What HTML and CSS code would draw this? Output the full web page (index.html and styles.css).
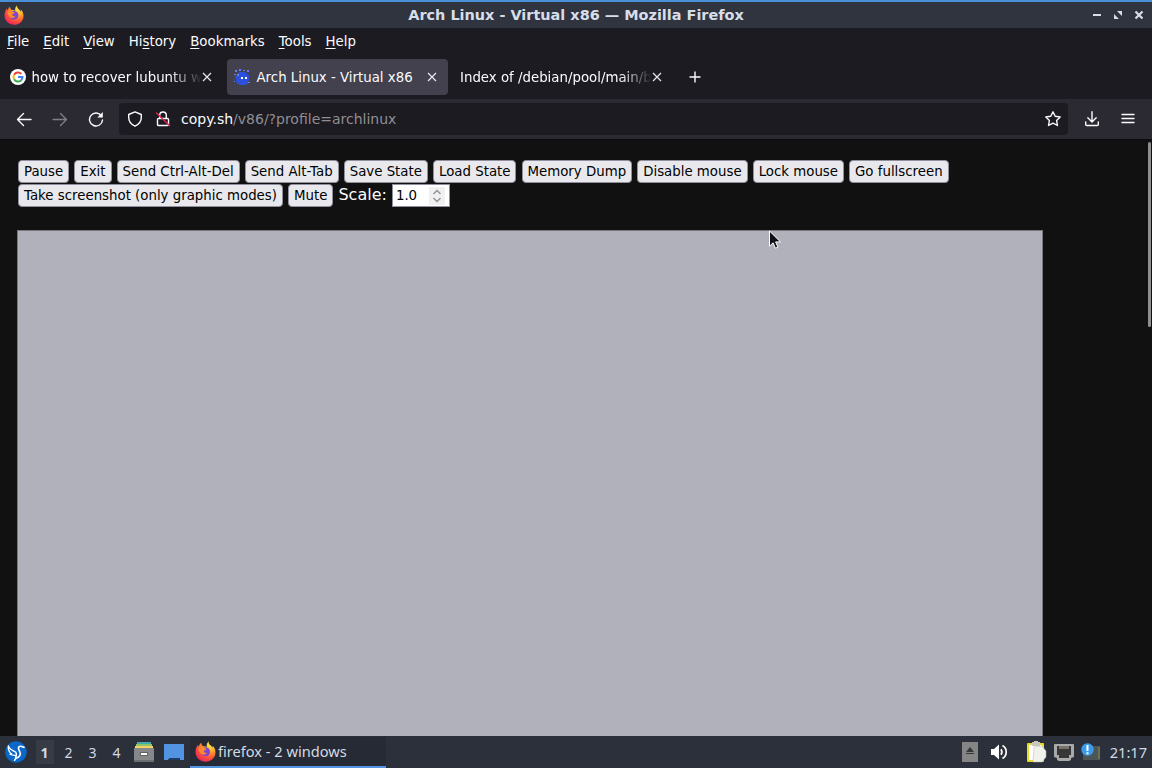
FILE: index.html
```
<!DOCTYPE html>
<html lang="en">
<head>
    <meta charset="UTF-8">
    <meta name="viewport" content="width=device-width, initial-scale=1.0">
    <title>Arch Linux - Virtual x86</title>
    <link rel="stylesheet" href="styles.css">
</head>
<body>

    <!-- Shared icons -->
    <svg class="defs" width="0" height="0">
        <defs>
            <radialGradient id="flame" cx="0.75" cy="0.15" r="0.95">
                <stop offset="0" stop-color="#fff04a"/>
                <stop offset="0.35" stop-color="#ffad2c"/>
                <stop offset="0.65" stop-color="#ff5a36"/>
                <stop offset="1" stop-color="#e8205f"/>
            </radialGradient>
            <symbol id="firefox" viewBox="0 0 20 20">
                <path fill="url(#flame)" d="M13.2 0.2c-.5 2 .3 2.900 1.800 4.200 1 .8 1.500 1.500 1.700 2.300.3-.6.200-1.600.1-2.200 2 1.900 2.900 4.500 2.700 7.200-.4 4.700-4.400 8.100-9.400 8.100C4.700 19.800.5 15.700.5 10.500c0-2.800 1-5.200 2.400-6.900 0 .8.200 1.400.5 1.900C4 3.700 5 2.300 6 1.700c0 1.500.8 2.700 1.900 3.300 1.300-.2 2.500.1 3.300.7-.4-2 .2-4.200 2-5.500z"/>
                <circle cx="10" cy="10.300" r="4.300" fill="#7a45d8"/>
                <path fill="#ff8a2a" d="M3.500 6.500c1.800-1 3.600-.7 4.600.2 1.200-.1 2.200.2 2.600.8-.3 1-1.500 1.300-2.500 1.800.3 1.800 1.700 2.300 3.400 1.900-1.200 1.900-4 2.400-5.800.9C4.300 11 3.400 8.800 3.500 6.500z"/>
            </symbol>
            <symbol id="close" viewBox="0 0 10 10">
                <path d="M1 1l8 8M9 1l-8 8" fill="none" stroke="#e8e8ee" stroke-width="1.200"/>
            </symbol>
        </defs>
    </svg>

    <!-- Window title -->
    <div class="titlebar">
        <svg class="app-icon" width="20" height="20"><use href="#firefox"/></svg>
        <span class="title">Arch Linux - Virtual x86 — Mozilla Firefox</span>
        <div class="window-buttons">
            <svg width="10" height="10" viewBox="0 0 10 10"><path d="M1 5h8" stroke="#d8dee9" stroke-width="2"/></svg>
            <svg width="10" height="10" viewBox="0 0 10 10" fill="#d8dee9"><path d="M4 1h5v5zM1 4v5h5z"/></svg>
            <svg width="10" height="10" viewBox="0 0 10 10"><path d="M1.500 1.500l7 7M8.500 1.500l-7 7" stroke="#d8dee9" stroke-width="2.200"/></svg>
        </div>
    </div>

    <div class="menubar">
        <span><u>F</u>ile</span>
        <span><u>E</u>dit</span>
        <span><u>V</u>iew</span>
        <span>Hi<u>s</u>tory</span>
        <span><u>B</u>ookmarks</span>
        <span><u>T</u>ools</span>
        <span><u>H</u>elp</span>
    </div>

    <!-- Tabs -->
    <div class="tabs">
        <div class="tab">
            <svg class="favicon" width="16" height="16" viewBox="0 0 16 16">
                <circle cx="8" cy="8" r="8" fill="#fff"/>
                <g fill="none" stroke-width="2">
                    <path d="M4.100 5.700A4.500 4.500 0 0 1 11.300 4.900" stroke="#ea4335"/>
                    <path d="M4.100 10.200A4.500 4.500 0 0 1 4.100 5.700" stroke="#fbbc05"/>
                    <path d="M11 11.400A4.500 4.500 0 0 1 4.100 10.200" stroke="#34a853"/>
                    <path d="M8 8h4.500A4.500 4.500 0 0 1 11 11.400" stroke="#4285f4"/>
                </g>
            </svg>
            <span class="label fade">how to recover lubuntu w</span>
            <svg class="close" width="10" height="10"><use href="#close"/></svg>
        </div>
        <div class="tab active">
            <svg class="favicon" width="16" height="16" viewBox="0 0 16 16">
                <path fill="#2d50dc" d="M3 4h2V3h6v1h2v2h2v6h-1v3h-2v1H5v-1H3v-2H2V9H1V7h2z"/>
                <path fill="#5d82ff" d="M1 1h2v2H1zM5 0h2v2H5zM9 1h2v1H9zM13 1h2v2h-2zM0 5h2v1H0zM3 5h2v2H3zM0 12h1v1H0zM14 13h2v1h-2z"/>
                <path fill="#fff" d="M7 8h2v2H7zM11 8h2v2h-2z"/>
            </svg>
            <span class="label">Arch Linux - Virtual x86</span>
            <svg class="close" width="10" height="10"><use href="#close"/></svg>
        </div>
        <div class="tab">
            <span class="label fade">Index of /debian/pool/main/b</span>
            <svg class="close" width="10" height="10"><use href="#close"/></svg>
        </div>
        <svg class="new-tab" width="12" height="12" viewBox="0 0 12 12"><path d="M6 .5v11M.5 6h11" stroke="#fbfbfe" stroke-width="1.400"/></svg>
    </div>

    <!-- Navigation -->
    <div class="toolbar">
        <div class="nav">
            <svg width="16" height="16" viewBox="0 0 16 16"><path d="M15 8.500H1.500M7.500 2.500l-6 6 6 6"/></svg>
            <svg class="disabled" width="16" height="16" viewBox="0 0 16 16"><path d="M1 8.500h13.500M8.500 2.500l6 6-6 6"/></svg>
            <svg width="16" height="16" viewBox="0 0 16 16"><path d="M13.500 5A6.500 6.500 0 1 0 14.500 9"/><path d="M14.800 1v5.500H9.300z" fill="#fbfbfe" stroke="none"/></svg>
        </div>
        <div class="urlbar">
            <svg width="16" height="16" viewBox="0 0 16 16"><path d="M8 .9l6.300 2.600v3c0 3.800-2.400 6.900-6.300 8.700C4.100 13.400 1.700 10.300 1.700 6.500v-3z"/></svg>
            <svg width="16" height="16" viewBox="0 0 16 16"><path d="M4.700 7V4.300a3.300 3.300 0 0 1 6.600 0V7M3.500 7.500h9q1 0 1 1v5q0 1-1 1h-9q-1 0-1-1v-5q0-1 1-1z"/><path class="slash" d="M1.500 2l13 12.500"/></svg>
            <span class="url">copy.sh<span class="path">/v86/?profile=archlinux</span></span>
            <svg class="star" width="18" height="18" viewBox="0 0 18 18"><path d="M9 1.800l2.200 4.500 5 .7-3.600 3.500.9 5L9 13.100l-4.500 2.400.9-5L1.800 7l5-.7z"/></svg>
        </div>
        <svg width="16" height="16" viewBox="0 0 16 16"><path d="M8 .8v10M3.800 6.700L8 10.900l4.200-4.200M1.700 11v2.500q0 1 1 1h10.600q1 0 1-1V11"/></svg>
        <svg width="16" height="16" viewBox="0 0 16 16"><path d="M2 3.500h12M2 7.500h12M2 11.500h12"/></svg>
    </div>

    <!-- Emulator page -->
    <div class="page">
        <div class="options">
            <button>Pause</button>
            <button>Exit</button>
            <button>Send Ctrl-Alt-Del</button>
            <button>Send Alt-Tab</button>
            <button>Save State</button>
            <button>Load State</button>
            <button>Memory Dump</button>
            <button>Disable mouse</button>
            <button>Lock mouse</button>
            <button>Go fullscreen</button>
        </div>
        <div class="options">
            <button>Take screenshot (only graphic modes)</button>
            <button>Mute</button>
            <span class="scale-label">Scale:</span>
            <div class="scale">
                <span>1.0</span>
                <svg width="16" height="18" viewBox="0 0 16 18"><path d="M4.500 7L8 3.500 11.500 7M4.500 11L8 14.500 11.500 11" fill="none" stroke="#8f8f94" stroke-width="1.300"/></svg>
            </div>
        </div>
        <div class="screen"></div>
        <div class="scrollbar"></div>
        <svg class="cursor" width="14" height="20" viewBox="0 0 14 20"><path d="M1.500 1v15.200l3.600-3.400 2.300 5.400 2.500-1.100-2.300-5.200h4.900z" fill="#101018" stroke="#fff" stroke-width="1"/></svg>
    </div>

    <!-- Panel -->
    <div class="taskbar">
        <svg class="start" width="22" height="22" viewBox="0 0 22 22">
            <circle cx="11" cy="11" r="10.700" fill="#0b68c8"/>
            <g fill="none" stroke="#fff" stroke-linecap="round" stroke-linejoin="round">
                <path stroke-width="1.600" d="M19 6.300c-1.500-.3-2.300-1.300-3.900-1-2.700.6-1.500 3.500-.3 5.400 1.500 2.800-.5 5.500-3.300 6.300-.9.500-1.500 1.200-1.900 2.300"/>
                <path stroke-width="1.300" d="M3.300 5c1 2.700 3.400 4.200 7.400 6.200M3.300 5c-.3 4 1 6.500 3.500 8M5 13.300c1.800 1 3.700 1.200 5.700 1M10.700 11.200c1.200 1.900.9 3.800-.2 5.300"/>
            </g>
        </svg>
        <div class="desktops">
            <span class="current">1</span>
            <span>2</span>
            <span>3</span>
            <span>4</span>
        </div>
        <svg class="files" width="22" height="22" viewBox="0 0 22 22">
            <path fill="#44a9ad" d="M4 1h14v4H4z"/>
            <path fill="#8fc36b" d="M3 3h16v3H3z"/>
            <path fill="#f2d263" d="M2 5h18v4H2z"/>
            <rect x="1" y="7" width="20" height="14" rx="1" fill="#85878a"/>
            <path fill="#6b6d70" d="M1 19h20v2H1z"/>
            <rect x="7" y="11" width="8" height="4" rx="1" fill="#606266"/>
            <rect x="8" y="12" width="6" height="2" fill="#fff"/>
        </svg>
        <svg class="desktop" width="20" height="18" viewBox="0 0 20 18">
            <path fill="#5294e2" d="M0 1h20v16h-4v-2H6v2H0z"/>
            <path fill="#1f3d66" d="M5 15h10v1h1v1H4v-1h1z"/>
        </svg>
        <div class="task">
            <svg width="21" height="21"><use href="#firefox"/></svg>
            <span>firefox - 2 windows</span>
        </div>
        <div class="tray">
            <svg width="16" height="20" viewBox="0 0 16 20"><rect width="16" height="20" fill="#858585"/><path d="M8 5l4 5H4zM4 11h8v1H4z" fill="#34363b"/></svg>
            <svg class="volume" width="18" height="16" viewBox="0 0 18 16"><path fill="#fff" d="M1 5h3l5-4.500v15L4 11H1z"/><path d="M11 5.200q1.800 2.800 0 5.600M12.500 1.500c5 3 5 10 0 13" fill="none" stroke="#fff" stroke-width="1.700"/></svg>
            <svg class="clipboard" width="20" height="22" viewBox="0 0 20 22"><rect y="2" width="17" height="19" rx="1" fill="#e6dc2c"/><path fill="#fff" d="M2 4h13v15H2z"/><path fill="#c8c8bd" d="M5 1h2V0h4v1h2v4H5z"/><path fill="#f2f2ec" stroke="#bbb9aa" stroke-width=".5" d="M7 6l8-1 4 5v6l-4 5H6z"/></svg>
            <svg class="network" width="20" height="19" viewBox="0 0 20 19"><path fill="#aaa9aa" d="M1 1h18q1 0 1 1v12l-3 1v2l-2 1H5l-2-1v-2l-3-1V2q0-1 1-1z"/><path fill="#393638" d="M3 3h14v9h-2v3H5v-3H3z"/><path d="M6 3v3M8 3v3M10 3v3M12 3v3M14 3v3" stroke="#c6bda7" stroke-width=".9"/></svg>
            <svg class="notifier" width="20" height="18" viewBox="0 0 20 18"><path fill="#4c5657" d="M2 3h17v14H2z"/><path fill="#687158" d="M17 4h2v12h-2z"/><circle cx="6.500" cy="6.500" r="6.200" fill="#3b9aea"/><path d="M6.500 2v6M6.500 9.200v2" stroke="#fff" stroke-width="2"/></svg>
            <span class="clock">21:17</span>
        </div>
    </div>

</body>
</html>
```

FILE: styles.css
```
* {
    box-sizing: border-box;
}
body {
    margin: 0;
    width: 1152px;
    height: 768px;
    overflow: hidden;
    display: flex;
    flex-direction: column;
    background: #111;
    color: #fbfbfe;
    font-family: 'DejaVu Sans', sans-serif;
    font-size: 13.33px;
}
svg {
    display: block;
    flex-shrink: 0;
}
.defs {
    height: 0;
}

/* title bar */
.titlebar {
    height: 28px;
    border-top: 2px solid #4a90d9;
    background: #2f343f;
    color: #d8dee9;
    display: grid;
    grid-template-columns: 1fr auto 1fr;
    align-items: center;
    padding: 0 8px 0 4px;
}
.title {
    font-weight: bold;
    font-size: 14.45px;
    margin-left: 4px;
}
.window-buttons {
    display: flex;
    justify-content: flex-end;
    gap: 11px;
}

.menubar {
    height: 26px;
    background: #1c1b22;
    display: flex;
    align-items: center;
    gap: 14px;
    padding-left: 7px;
}
.menubar u {
    text-underline-offset: 2px;
}

/* tabs */
.tabs {
    height: 45px;
    background: #1c1b22;
    display: flex;
    align-items: center;
    padding: 1px 0 0 2px;
    gap: 4px;
}
.tab {
    width: 221px;
    height: 36px;
    display: flex;
    align-items: center;
    padding: 0 11px 0 8px;
    border-radius: 4px;
    white-space: nowrap;
}
.tab.active {
    background: #42414d;
}
.tab.active .favicon {
    margin: 0 6.5px 0 -1px;
}
.favicon {
    margin-right: 5.5px;
}
.label {
    flex: 1;
}
.fade {
    -webkit-mask-image: linear-gradient(to left, transparent, #000 32px);
    mask-image: linear-gradient(to left, transparent, #000 32px);
}
.new-tab {
    margin-left: 12px;
}

/* navigation */
.toolbar {
    height: 41px;
    background: #2b2a33;
    border-bottom: 1px solid #0c0c0d;
    display: flex;
    align-items: center;
    padding: 0 16px;
}
.toolbar svg {
    fill: none;
    stroke: #fbfbfe;
    stroke-width: 1.4;
    stroke-linejoin: round;
    stroke-linecap: round;
}
.toolbar > svg {
    margin-left: 20px;
}
.toolbar > .urlbar + svg {
    margin-left: 16px;
}
.nav {
    display: flex;
    gap: 20px;
}
.nav .disabled {
    opacity: 0.4;
}
.urlbar {
    flex: 1;
    height: 32px;
    margin-left: 15px;
    padding: 0 6px 0 8px;
    background: #1c1b22;
    border-radius: 4px;
    display: flex;
    align-items: center;
    gap: 12px;
}
.urlbar .slash {
    stroke: #e22850;
}
.url {
    flex: 1;
    margin-left: -2px;
    font-size: 14px;
}
.path {
    color: #8f8e94;
}

/* page */
.page {
    height: 596px;
    position: relative;
    overflow: hidden;
    padding: 20px 0 0 18px;
    background: #111;
}
.options {
    height: 24px;
    display: flex;
    align-items: flex-start;
    gap: 5.05px;
}
.options button {
    height: 23px;
    padding: 0 5px 1px;
    border: 1px solid #8f8f9d;
    border-radius: 4px;
    background: #e9e9ed;
    color: #000;
    font-family: inherit;
    font-size: 13.33px;
    white-space: nowrap;
}
.scale-label {
    font-size: 16px;
    line-height: 22px;
}
.scale {
    width: 58px;
    height: 23px;
    padding: 0 4px 0 3px;
    border: 1px solid #8f8f9d;
    background: #fff;
    color: #000;
    display: flex;
    align-items: center;
    justify-content: space-between;
}
.scale svg {
    background: #f0f0f2;
}
.screen {
    width: 1026px;
    height: 768px;
    margin: 22px 0 0 -1px;
    border: 1px solid #777780;
    background: #b1b1bc;
}
.scrollbar {
    position: absolute;
    top: 2px;
    right: 1px;
    width: 3px;
    height: 185px;
    border-radius: 2px;
    background: #8f8f91;
}
.cursor {
    position: absolute;
    left: 768px;
    top: 90px;
}

/* panel */
.taskbar {
    height: 32px;
    background: #2b303b;
    color: #d3dae3;
    display: flex;
    align-items: center;
    padding: 0 5px;
    font-family: 'Noto Sans', sans-serif;
    font-size: 14.6px;
}
.desktops {
    display: flex;
    margin-left: 8.5px;
    gap: 6px;
}
.desktops span {
    width: 18px;
    height: 24px;
    line-height: 25px;
    text-align: center;
    font-size: 14px;
}
.desktops .current {
    background: #373b46;
    font-weight: bold;
}
.files {
    margin-left: 7.5px;
}
.desktop {
    margin-left: 9px;
}
.task {
    width: 196px;
    height: 31px;
    margin-left: 6px;
    padding-left: 5px;
    border-bottom: 2px solid #5294e2;
    background: #252a35;
    display: flex;
    align-items: center;
    gap: 2px;
}
.tray {
    margin-left: auto;
    display: flex;
    align-items: center;
}
.volume {
    margin-left: 12px;
}
.clipboard {
    margin-left: 19px;
}
.network {
    margin-left: 7px;
}
.notifier {
    margin-left: 7px;
}
.clock {
    margin-left: 9px;
}
```
